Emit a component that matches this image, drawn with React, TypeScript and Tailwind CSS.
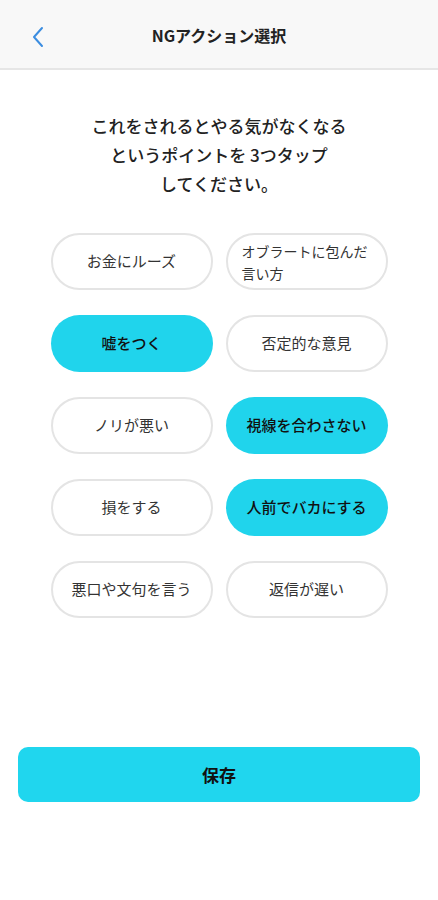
import React from "react";

const items: { label: string; selected: boolean; left?: boolean }[] = [
  { label: "お金にルーズ", selected: false },
  { label: "オブラートに包んだ言い方", selected: false, left: true },
  { label: "嘘をつく", selected: true },
  { label: "否定的な意見", selected: false },
  { label: "ノリが悪い", selected: false },
  { label: "視線を合わさない", selected: true },
  { label: "損をする", selected: false },
  { label: "人前でバカにする", selected: true },
  { label: "悪口や文句を言う", selected: false },
  { label: "返信が遅い", selected: false },
];

export default function App() {
  return (
    <div
      className="w-[438px] h-[900px] bg-white flex flex-col"
      style={{ fontFamily: '"Noto Sans CJK JP", "Noto Sans", sans-serif' }}
    >
      <div className="h-[70px] bg-[#f8f8f8] border-b-2 border-[#e6e6e6] flex items-center relative shrink-0">
        <svg className="absolute left-[31px] top-[26px]" width="14" height="22" viewBox="0 0 14 22" fill="none">
          <path d="M11 2 L3 11 L11 20" stroke="#3b8de0" strokeWidth="2" strokeLinecap="round" strokeLinejoin="round" />
        </svg>
        <div className="w-full text-center text-[16px] font-bold text-[#222] mt-[2px]">NGアクション選択</div>
      </div>
      <div className="mt-[41px] text-center text-[17px] font-medium text-[#222] leading-[29px]">
        <div>これをされるとやる気がなくなる</div>
        <div>というポイントを 3つタップ</div>
        <div>してください。</div>
      </div>
      <div className="mt-[35px] grid grid-cols-[162px_162px] justify-center gap-x-[13px] gap-y-[25px]">
        {items.map((it) => (
          <div
            key={it.label}
            className={
              "h-[57px] rounded-full flex items-center " +
              (it.left ? "justify-start pl-[14px] pr-[10px] text-[14px] leading-[22px] " : "justify-center text-[15px] ") +
              (it.selected
                ? "bg-[#20d4ec] text-[#111] font-medium"
                : "bg-white border-2 border-[#e4e4e4] text-[#333]")
            }
          >
            {it.label}
          </div>
        ))}
      </div>
      <div className="mt-auto mb-[98px] px-[18px]">
        <div className="h-[55px] rounded-[10px] bg-[#20d6ee] flex items-center justify-center text-[17px] font-bold text-[#111]">
          保存
        </div>
      </div>
    </div>
  );
}
